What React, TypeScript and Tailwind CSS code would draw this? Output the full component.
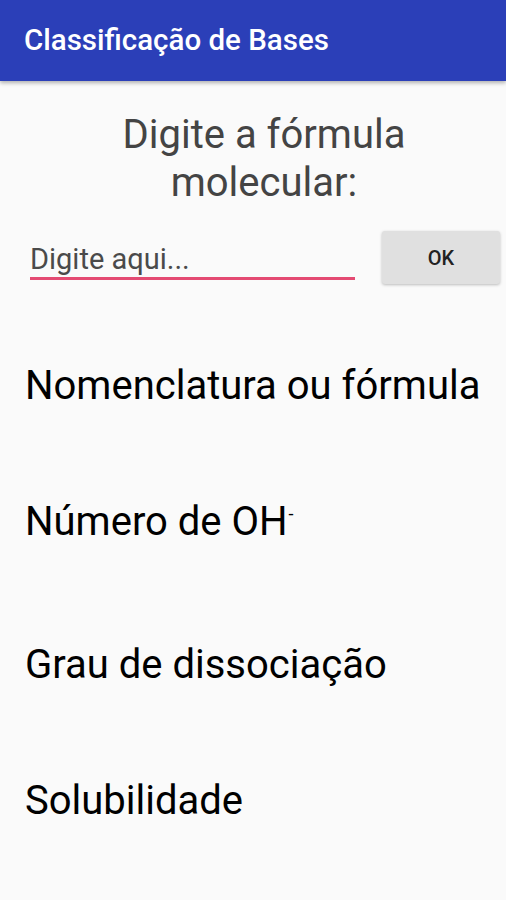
export default function App() {
  const items = ['Nomenclatura ou fórmula', 'Número de OH', 'Grau de dissociação', 'Solubilidade']

  return (
    <div className="w-[506px] h-[900px] bg-[#fafafa] overflow-hidden" style={{ fontFamily: 'Roboto, "Noto Sans", sans-serif' }}>
      {/* App bar */}
      <div className="h-[81px] bg-[#2b3fb8] flex items-center px-6 shadow-[0_2px_4px_rgba(0,0,0,0.3)] relative">
        <h1 className="text-white text-[29.5px] font-medium leading-none">Classificação de Bases</h1>
      </div>

      <div className="pl-[46px] pr-[24px] pt-[30px]">
        <p className="text-center text-[40px] leading-[48px] text-[#444]">Digite a fórmula molecular:</p>
      </div>

      <div className="flex items-start pl-[30px] pr-[6px] mt-[24px]">
        <div className="w-[325px] mt-[10px] border-b-[3px] border-[#e44a72]">
          <span className="block text-[29px] text-[#4a4a4a] leading-[36px]">Digite aqui...</span>
        </div>
        <button className="ml-auto w-[118px] h-[53px] bg-[#e0e0e0] rounded-[3px] shadow-[0_1px_3px_rgba(0,0,0,0.25)] text-[20px] font-medium text-[#222]">
          OK
        </button>
      </div>

      <div className="pl-[25px] mt-[78px] flex flex-col gap-[88px]">
        {items.map((item) => (
          <p key={item} className="text-[40px] leading-[48px] text-black">
            {item}
            {item === 'Número de OH' && <span className="text-[18px] relative -top-[15px] ml-[1px]">-</span>}
          </p>
        ))}
      </div>
    </div>
  )
}
